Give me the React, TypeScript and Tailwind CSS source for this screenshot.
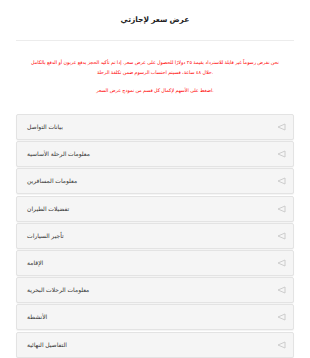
const sections = [
  'بيانات التواصل',
  'معلومات الرحلة الأساسية',
  'معلومات المسافرين',
  'تفضيلات الطيران',
  'تأجير السيارات',
  'الإقامة',
  'معلومات الرحلات البحرية',
  'الأنشطة',
  'التفاصيل النهائية',
];

function Arrow() {
  return (
    <svg width="9" height="8" viewBox="0 0 9 8" className="shrink-0">
      <path d="M8 1 L1 4 L8 7 Z" fill="none" stroke="#c8c8c8" strokeWidth="0.9" strokeLinejoin="round" />
    </svg>
  );
}

export default function App() {
  return (
    <div
      className="min-h-[358px] w-full bg-white"
      style={{ fontFamily: '"Liberation Sans", "DejaVu Sans", Arial, sans-serif' }}
    >
      <div className="mx-4 border-b border-[#ececec] pt-[14px] pb-[14px]">
        <h1 className="text-center text-[7.5px] font-bold leading-[12px] text-[#222]">
          عرض سعر لإجازتي
        </h1>
      </div>

      <div className="mx-[10px] mt-[17px] text-center text-[4.8px] leading-[10px] text-[#f00]">
        <p className="whitespace-nowrap">
          نحن نفرض رسوماً غير قابلة للاسترداد بقيمة ٢٥ دولارًا للحصول على عرض سعر. إذا تم تأكيد الحجز بدفع عربون أو الدفع بالكامل
          <br />
          خلال ٤٨ ساعة، فسيتم احتساب الرسوم ضمن تكلفة الرحلة.
        </p>
        <p className="mt-[8px]">اضغط على الأسهم لإكمال كل قسم من نموذج عرض السعر.</p>
      </div>

      <div className="mx-4 mt-[18px] flex flex-col gap-[1.2px]">
        {sections.map((s) => (
          <div
            key={s}
            className="flex h-[26px] items-center justify-between rounded-[2px] border border-[#e3e3e3] bg-[#f5f5f5] pl-[10px] pr-[7px] shadow-[0_1px_1px_rgba(0,0,0,0.05)]"
          >
            <span className="text-[6px] leading-[10px] text-[#333]">{s}</span>
            <Arrow />
          </div>
        ))}
      </div>
    </div>
  );
}
